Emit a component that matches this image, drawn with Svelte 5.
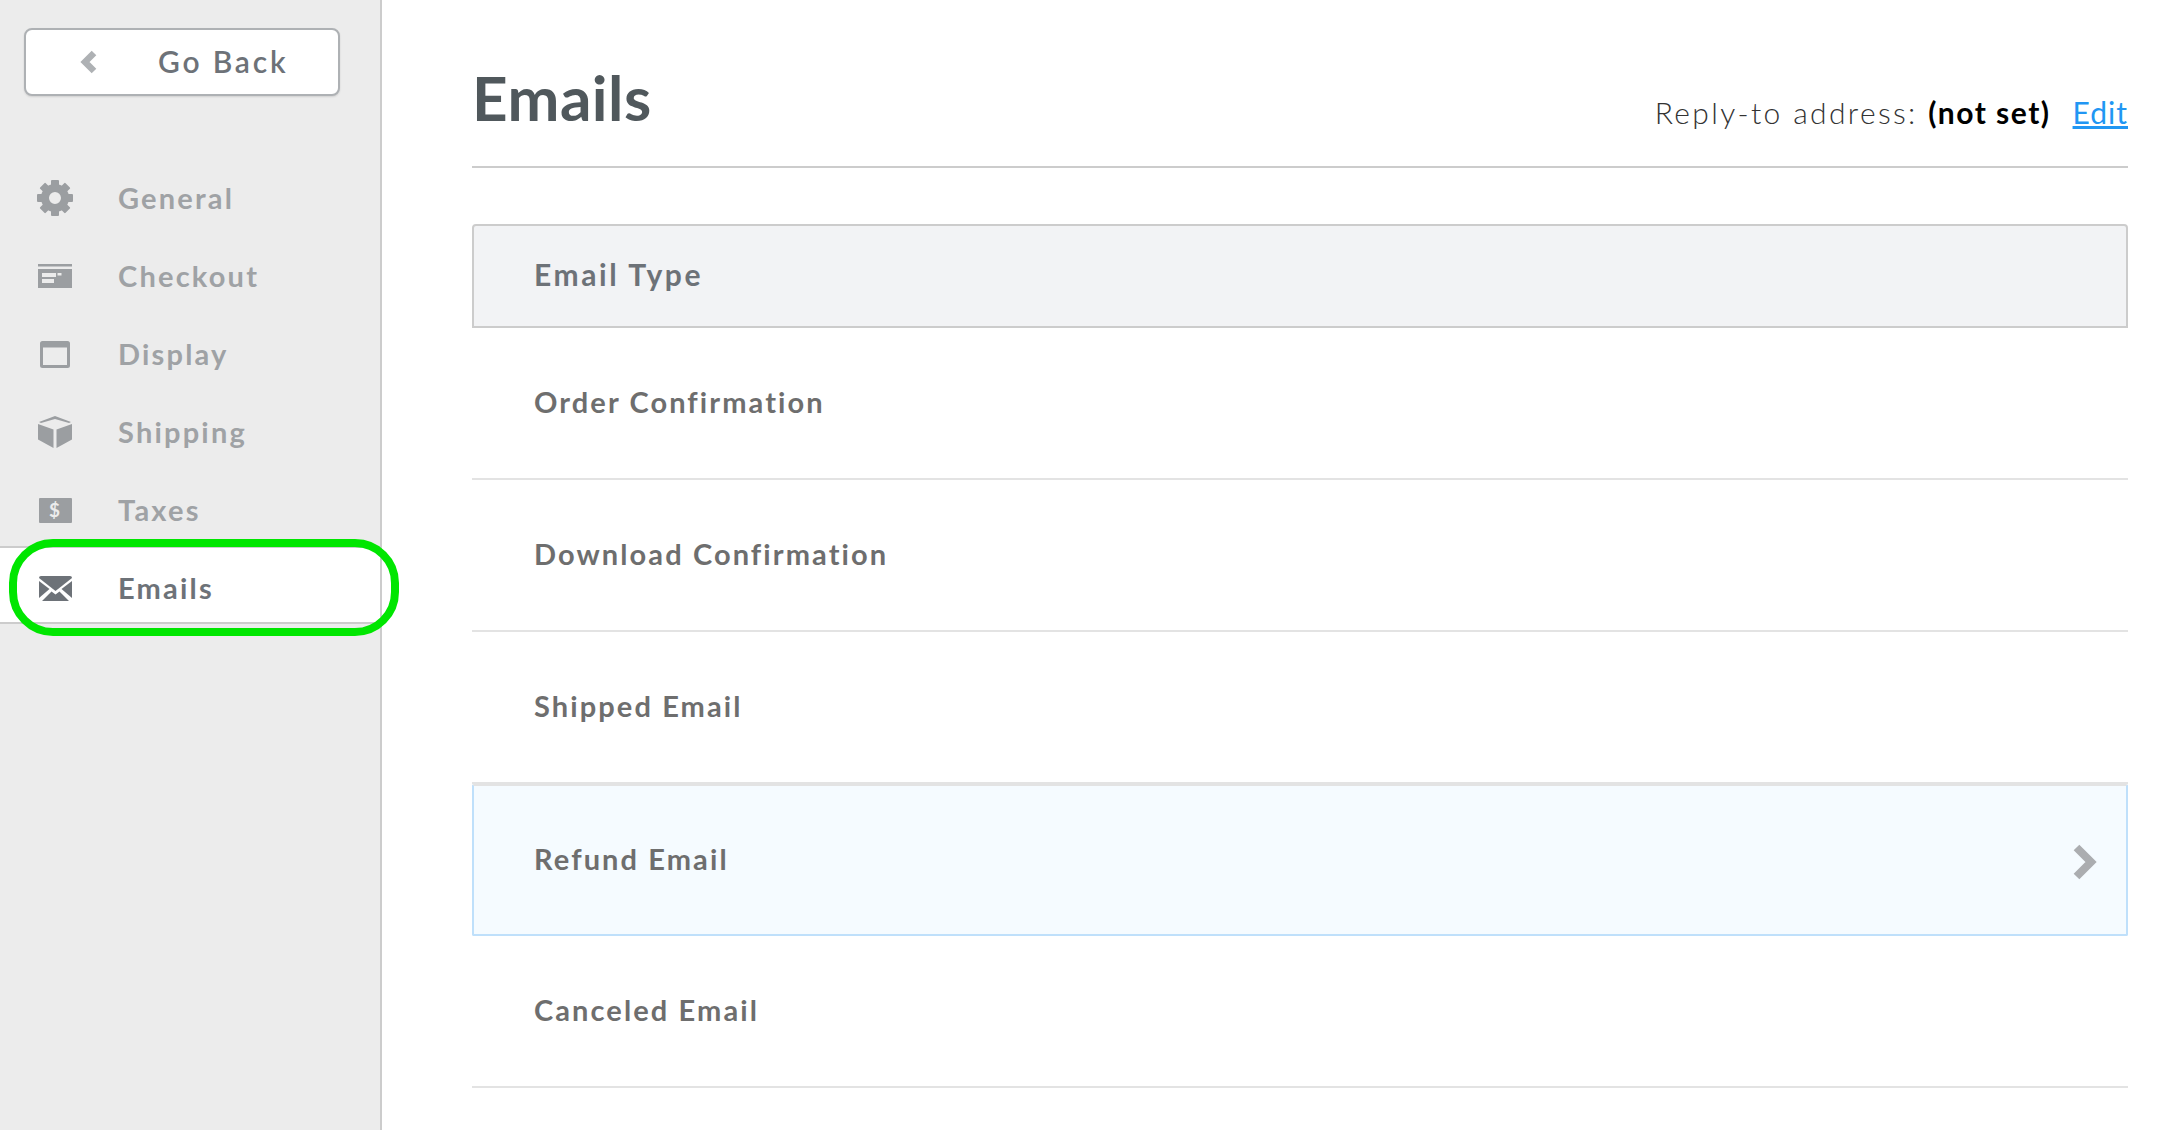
<script>
  const nav = ['General', 'Checkout', 'Display', 'Shipping', 'Taxes', 'Emails'];
  const rows = ['Order Confirmation', 'Download Confirmation', 'Shipped Email', 'Refund Email', 'Canceled Email'];
</script>

<div class="page">
  <aside class="sidebar">
    <button class="back">
      <svg class="back-chev" viewBox="0 0 18 24" width="18" height="24"><path d="M14 3 L5 12 L14 21" fill="none" stroke="#aeb1b4" stroke-width="6.500" stroke-linejoin="miter"/></svg>
      <span>Go Back</span>
    </button>
    <nav class="nav">
      {#each nav as item}
        <div class="nav-item" class:active={item === 'Emails'}>
          <span class="icon">
            {#if item === 'General'}
              <svg viewBox="0 0 36 36" width="36" height="36"><g fill="#9b9ea1"><circle cx="18" cy="18" r="10" fill="none" stroke="#9b9ea1" stroke-width="8"/><rect x="14" y="0" width="8" height="7" rx="1"/><rect x="14" y="29" width="8" height="7" rx="1"/><rect x="0" y="14" width="7" height="8" rx="1"/><rect x="29" y="14" width="7" height="8" rx="1"/><g transform="rotate(45 18 18)"><rect x="14" y="0" width="8" height="7" rx="1"/><rect x="14" y="29" width="8" height="7" rx="1"/><rect x="0" y="14" width="7" height="8" rx="1"/><rect x="29" y="14" width="7" height="8" rx="1"/></g></g></svg>
            {:else if item === 'Checkout'}
              <svg viewBox="0 0 34 24" width="34" height="24"><rect x="0" y="0" width="34" height="2.500" fill="#9b9ea1"/><path fill="#9b9ea1" d="M0 5h34v19H0z"/><rect x="4" y="9" width="14" height="4" fill="#ececec"/><rect x="19.500" y="9" width="4" height="2.500" fill="#ececec"/><rect x="4" y="15" width="12" height="4" fill="#ececec"/></svg>
            {:else if item === 'Display'}
              <svg viewBox="0 0 30 27" width="30" height="27"><rect x="1.500" y="1.500" width="27" height="24" rx="1" fill="none" stroke="#9b9ea1" stroke-width="3"/><rect x="1.500" y="1.500" width="27" height="5" fill="#9b9ea1"/></svg>
            {:else if item === 'Shipping'}
              <svg viewBox="0 0 34 32" width="34" height="32"><g fill="#9b9ea1"><path d="M17 0 L33 6 L31 7 L17 3 L3 7 L1 6 Z"/><path d="M0 8 L15.500 13.500 V32 L0 23.500 Z"/><path d="M34 8 L18.500 13.500 V32 L34 23.500 Z"/></g></svg>
            {:else if item === 'Taxes'}
              <svg viewBox="0 0 33 25" width="33" height="25"><rect width="33" height="25" rx="1" fill="#9b9ea1"/><text x="16.500" y="19" text-anchor="middle" font-family="Lato" font-weight="700" font-size="19" fill="#ececec">$</text></svg>
            {:else}
              <svg viewBox="0 0 33 25" width="33" height="25"><path fill="#6d7278" d="M2 0h29a2 2 0 0 1 2 2L16.500 15 0 2a2 2 0 0 1 2-2z"/><path fill="#6d7278" d="M0 5l10.500 8L0 22z"/><path fill="#6d7278" d="M33 5L22.500 13 33 22z"/><path fill="#6d7278" d="M3 25L12.500 15.500l4 3 4-3L30 25z"/></svg>
            {/if}
          </span>
          <span class="label">{item}</span>
        </div>
      {/each}
    </nav>
    <div class="ring"></div>
  </aside>

  <main class="main">
    <header class="head">
      <h1>Emails</h1>
      <div class="reply">Reply-to address: <b>(not set)</b><a href="#edit">Edit</a></div>
    </header>
    <div class="thead">Email Type</div>
    {#each rows as row}
      <div class="row" class:hover={row === 'Refund Email'}>
        <span>{row}</span>
        {#if row === 'Refund Email'}
          <svg class="chev" viewBox="0 0 26 36" width="26" height="36"><path d="M4.500 3.500 L19 18 L4.500 32.500" fill="none" stroke="#abadb0" stroke-width="8"/></svg>
        {/if}
      </div>
    {/each}
  </main>
</div>

<style>
  :global(body) { margin: 0; background: #fff; }
  .page { display: flex; width: 2180px; height: 1130px; overflow: hidden; font-family: Lato, "Open Sans", sans-serif; }
  .sidebar { position: relative; box-sizing: border-box; width: 382px; flex: none; background: #ececec; border-right: 2px solid #cccccc; padding: 28px 0 0 0; }
  .back { display: flex; align-items: center; box-sizing: border-box; width: 316px; height: 68px; margin-left: 24px; padding: 0 0 0 54px; background: #fff; border: 2px solid #aeb1b4; border-radius: 8px; box-shadow: 0 1px 2px rgba(0,0,0,.12); font: 600 30px Lato, sans-serif; color: #6d7278; letter-spacing: 2.8px; }
  .back span { margin-left: 60px; margin-top: -3px; }
  .back-chev { flex: none; }
  .nav { display: flex; flex-direction: column; margin-top: 63px; }
  .nav-item { display: flex; align-items: center; box-sizing: border-box; height: 78px; padding-left: 37px; color: #9fa2a5; font-size: 29px; font-weight: 700; letter-spacing: 2.2px; }
  .label { margin-top: -2px; }
  .nav-item.active { width: 380px; height: 78px; margin-top: -3px; padding-top: 6px; background: #fff; border-top: 2px solid #cccccc; border-bottom: 2px solid #cccccc; color: #6d7278; }
  .icon { display: flex; align-items: center; justify-content: center; width: 36px; height: 36px; margin-right: 45px; flex: none; }
  .ring { position: absolute; left: 9px; top: 539px; width: 390px; height: 97px; box-sizing: border-box; border: 8px solid #00e600; border-radius: 44px; }
  .main { flex: none; box-sizing: border-box; width: 1798px; padding: 0 52px 0 90px; }
  .head { display: flex; justify-content: space-between; align-items: flex-start; box-sizing: border-box; height: 168px; padding-top: 61px; border-bottom: 2px solid #cccccc; }
  h1 { margin: 0; font-size: 62px; font-weight: 700; line-height: 72px; letter-spacing: 0.5px; color: #50585c; }
  .reply { font-size: 30px; font-weight: 300; letter-spacing: 2.35px; color: #333; margin-top: 33px; }
  .reply b { color: #000; font-weight: 700; letter-spacing: 1.5px; }
  .reply a { margin-left: 22px; color: #2196f3; text-decoration: underline; letter-spacing: 1px; font-weight: 400; }
  .thead { display: flex; align-items: center; box-sizing: border-box; height: 104px; margin-top: 56px; padding: 0 0 4px 60px; background: #f2f3f5; border: 2px solid #cccccc; border-radius: 4px 4px 0 0; color: #6d7278; font-size: 30px; font-weight: 700; letter-spacing: 2.6px; }
  .row { display: flex; align-items: center; justify-content: space-between; box-sizing: border-box; height: 152px; padding: 0 28px 0 62px; border-bottom: 2px solid #e3e3e3; color: #6e6e6e; font-size: 29px; font-weight: 700; letter-spacing: 2.1px; }
  .row > span { margin-top: -3px; }
  .row.hover { background: #f5fbff; border: 2px solid #bfe0fb; border-top-color: #e3e3e3; border-radius: 2px; padding-left: 60px; }
  .chev { margin-top: 4px; }
</style>
